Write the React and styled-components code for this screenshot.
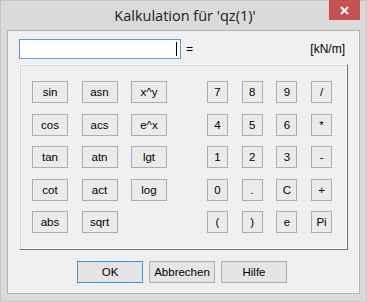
import React from 'react'
import styled, { createGlobalStyle } from 'styled-components'

const Global = createGlobalStyle`
  body {
    margin: 0;
    background: #dadada;
    font-family: "Liberation Sans", Arial, sans-serif;
  }
`

const Frame = styled.div`
  position: relative;
  box-sizing: border-box;
  width: 367px;
  height: 302px;
  border: 1px solid #c6c6c6;
  background: #dadada;
  padding: 0 6px 7px 6px;
  display: flex;
  flex-direction: column;
`

const TitleBar = styled.div`
  height: 29px;
  flex: none;
  display: flex;
  align-items: center;
  justify-content: center;
  padding-left: 3px;
  font-family: "Open Sans", "Liberation Sans", sans-serif;
  font-size: 14.5px;
  color: #1b1b1b;
`

const CloseButton = styled.div`
  position: absolute;
  top: -1px;
  right: 6px;
  width: 31px;
  height: 20px;
  background: #c75050;
  display: flex;
  align-items: center;
  justify-content: center;
`

const Client = styled.div`
  flex: 1;
  box-sizing: border-box;
  border: 1px solid #b4b4b4;
  background: #f0f0f0;
  padding: 8px 0 0 11px;
  display: flex;
  flex-direction: column;
`

const InputRow = styled.div`
  display: flex;
  align-items: center;
  height: 20px;
  font-size: 12px;
  color: #000;
`

const Field = styled.div`
  box-sizing: border-box;
  width: 162px;
  height: 20px;
  border: 1px solid #569de5;
  background: #fff;
  display: flex;
  align-items: center;
  justify-content: flex-end;
  padding-right: 3px;
`

const Caret = styled.span`
  width: 1px;
  height: 14px;
  background: #000;
`

const Equals = styled.span`
  margin-left: 5px;
`

const Unit = styled.span`
  margin-left: auto;
  margin-right: 14px;
`

const Group = styled.div`
  box-sizing: border-box;
  margin-top: 5px;
  width: 329px;
  height: 186px;
  border: 1px solid;
  border-color: #fbfbfb #6d6d6d #6d6d6d #fbfbfb;
  box-shadow: inset 1px 1px 0 #d6d6d6, inset -1px -1px 0 #ffffff;
  padding: 16px 0 0 12px;
  display: flex;
`

const Keys = styled.div`
  display: grid;
  grid-template-columns: repeat(${(p) => p.cols}, ${(p) => p.w}px);
  grid-auto-rows: 22px;
  column-gap: ${(p) => p.gap}px;
  row-gap: 10.5px;
  margin-left: ${(p) => p.offset || 0}px;
`

const Key = styled.button`
  box-sizing: border-box;
  margin: 0;
  padding: 0;
  border: 1px solid #adadad;
  background: #ebebeb;
  font-family: "Liberation Sans", Arial, sans-serif;
  font-size: 11.5px;
  color: #000;
  display: flex;
  align-items: center;
  justify-content: center;
`

const Footer = styled.div`
  display: flex;
  gap: 6px;
  margin-top: 11px;
  margin-left: 58px;
`

const DialogButton = styled.button`
  box-sizing: border-box;
  margin: 0;
  padding: 0;
  width: 66px;
  height: 22px;
  border: 1px solid ${(p) => (p.primary ? '#3c8fe0' : '#adadad')};
  background: #e5e5e5;
  font-family: "Liberation Sans", Arial, sans-serif;
  font-size: 11.5px;
  color: #000;
`

const functions = ['sin', 'asn', 'x^y', 'cos', 'acs', 'e^x', 'tan', 'atn', 'lgt', 'cot', 'act', 'log', 'abs', 'sqrt']
const digits = ['7', '8', '9', '/', '4', '5', '6', '*', '1', '2', '3', '-', '0', '.', 'C', '+', '(', ')', 'e', 'Pi']

export default function App() {
  return (
    <>
      <Global />
      <Frame>
        <TitleBar>Kalkulation für 'qz(1)'</TitleBar>
        <CloseButton>
          <svg width="9" height="9" viewBox="0 0 9 9">
            <path d="M1 1 L8 8 M8 1 L1 8" stroke="#fff" strokeWidth="2" />
          </svg>
        </CloseButton>
        <Client>
          <InputRow>
            <Field>
              <Caret />
            </Field>
            <Equals>=</Equals>
            <Unit>[kN/m]</Unit>
          </InputRow>
          <Group>
            <Keys cols={3} w={36} gap={13.5}>
              {functions.map((f) => (
                <Key key={f}>{f}</Key>
              ))}
            </Keys>
            <Keys cols={4} w={21} gap={13.7} offset={40}>
              {digits.map((d) => (
                <Key key={d}>{d}</Key>
              ))}
            </Keys>
          </Group>
          <Footer>
            <DialogButton primary>OK</DialogButton>
            <DialogButton>Abbrechen</DialogButton>
            <DialogButton>Hilfe</DialogButton>
          </Footer>
        </Client>
      </Frame>
    </>
  )
}
